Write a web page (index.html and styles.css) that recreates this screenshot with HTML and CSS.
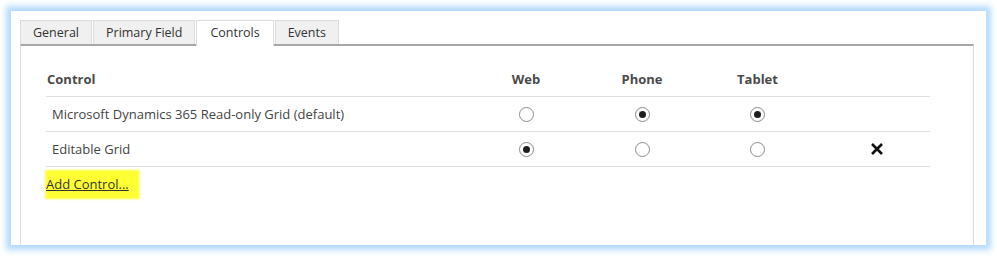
FILE: index.html
```html
<!DOCTYPE html>
<html>
<head>
	<title>Controls</title>
	<meta charset="utf-8">
	<link rel="stylesheet" href="styles.css">
</head>
<body>

	<div class="card">
		<div class="tabs">
			<div class="tab">General</div>
			<div class="tab">Primary Field</div>
			<div class="tab --active">Controls</div>
			<div class="tab">Events</div>
		</div>

		<div class="panel">
			<div class="grid">
				<div class="row head">
					<div class="name">Control</div>
					<div class="cell">Web</div>
					<div class="cell">Phone</div>
					<div class="cell">Tablet</div>
					<div class="cell"></div>
				</div>

				<div class="row">
					<div class="name --pad">Microsoft Dynamics 365 Read-only Grid (default)</div>
					<div class="cell"><span class="radio"></span></div>
					<div class="cell"><span class="radio --on"></span></div>
					<div class="cell"><span class="radio --on"></span></div>
					<div class="cell"></div>
				</div>

				<div class="row">
					<div class="name --pad">Editable Grid</div>
					<div class="cell"><span class="radio --on"></span></div>
					<div class="cell"><span class="radio"></span></div>
					<div class="cell"><span class="radio"></span></div>
					<div class="cell remove">
						<svg width="14" height="14" viewBox="0 0 14 14">
							<path d="M2 2 L12 12 M12 2 L2 12" stroke="#111" stroke-width="2.6" fill="none"/>
						</svg>
					</div>
				</div>
			</div>

			<div class="add">
				<a href="#" class="addLink">Add Control...</a>
			</div>
		</div>
	</div>

</body>
</html>
```

FILE: styles.css
```css
/* * {border: 1px solid red;} */

body {
	margin: 0;
	background: #fff;
	font-family: "Segoe UI", "Open Sans", sans-serif;
	font-size: 13px;
	color: #444;
}

.card {
	margin: 11px;
	height: 234px;
	padding: 9px 12px 0 9px;
	box-sizing: border-box;
	background: #fff;
	overflow: hidden;
	box-shadow: 0 0 6px 5px #b3dbff;
}

/* tab strip */

.tabs {
	display: flex;
	height: 24px;
}

.tab {
	box-sizing: border-box;
	height: 24px;
	padding: 0 12px;
	margin-right: 1px;
	line-height: 23px;
	background: #f0f0f0;
	border: 1px solid #dcdcdc;
	border-bottom: none;
	color: #333;
	font-size: 12.5px;
}

.tab.--active {
	background: #fff;
	height: 26px;
	margin-bottom: -2px;
	position: relative;
	padding: 0 13px;
}

.panel {
	border: 1px solid #dcdcdc;
	border-top: 2px solid #a8a8a8;
	height: 240px;
	padding: 16px 43px 0 25px;
}

/* control table */

.row {
	display: grid;
	grid-template-columns: 422px 116px 116px 115px 1fr;
	height: 34px;
	align-items: center;
	border-bottom: 1px solid #dedede;
}

.head {
	font-weight: bold;
	color: #4a4a4a;
}

.name {
	padding-left: 1px;
}

.--pad {
	padding-left: 6px;
}

.cell {
	text-align: center;
	display: flex;
	justify-content: center;
	align-items: center;
}

.remove {
	padding-left: 8px;
}

.radio {
	width: 13px;
	height: 13px;
	border: 1px solid #8a8a8a;
	border-radius: 50%;
	box-sizing: content-box;
	display: flex;
	align-items: center;
	justify-content: center;
	background: #fff;
}

.radio.--on::after {
	content: "";
	width: 7px;
	height: 7px;
	border-radius: 50%;
	background: #1e1e1e;
}

/* add link, highlighted like a marker */

.add {
	height: 34px;
	display: flex;
	align-items: center;
}

.addLink {
	color: #333;
	text-decoration: underline;
	background: #ffff33;
	padding: 4px 9px 5px 0;
	box-shadow: 0 0 2px 1px #ffff33;
}
```
